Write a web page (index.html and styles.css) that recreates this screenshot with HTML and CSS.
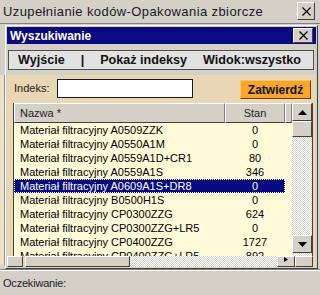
FILE: index.html
```html
<!DOCTYPE html>
<html lang="pl">
<head>
  <meta charset="UTF-8" />
  <title>Wyszukiwanie</title>
  <link rel="stylesheet" href="styles.css">
</head>
<body>
<div class="screen">

  <header class="app-title">
    <span>Uzupełnianie kodów-Opakowania zbiorcze</span>
    <button class="x-btn x-big"><svg width="9" height="9" viewBox="0 0 9 9"><path d="M0.5 0.5L8.5 8.5M8.5 0.5L0.5 8.5" stroke="#000" stroke-width="1.2"/></svg></button>
  </header>

  <div class="desk">
    <div class="peek"><div class="peek-body"></div></div>

    <div class="dialog">
      <div class="dlg-title">
        <span>Wyszukiwanie</span>
        <button class="x-btn x-small"><svg width="9" height="9" viewBox="0 0 9 9"><path d="M0.5 0.5L8.5 8.5M8.5 0.5L0.5 8.5" stroke="#000" stroke-width="1.2"/></svg></button>
      </div>

      <nav class="menu">
        <span>Wyjście</span>
        <span>|</span>
        <span>Pokaż indeksy</span>
        <span>Widok:wszystko</span>
      </nav>

      <div class="dlg-body">
        <div class="search">
          <label>Indeks:</label>
          <input type="text">
          <button class="ok">Zatwierdź</button>
        </div>

        <div class="list">
          <div class="list-main">
            <div class="cols">
              <div class="head">
                <div class="h-name">Nazwa *</div>
                <div class="h-stan">Stan</div>
                <div class="h-fill"></div>
              </div>
              <div class="row"><span class="r-name">Materiał filtracyjny A0509ZZK</span><span class="r-stan">0</span></div>
              <div class="row"><span class="r-name">Materiał filtracyjny A0550A1M</span><span class="r-stan">0</span></div>
              <div class="row"><span class="r-name">Materiał filtracyjny A0559A1D+CR1</span><span class="r-stan">80</span></div>
              <div class="row"><span class="r-name">Materiał filtracyjny A0559A1S</span><span class="r-stan">346</span></div>
              <div class="row sel"><span class="r-name">Materiał filtracyjny A0609A1S+DR8</span><span class="r-stan">0</span></div>
              <div class="row"><span class="r-name">Materiał filtracyjny B0500H1S</span><span class="r-stan">0</span></div>
              <div class="row"><span class="r-name">Materiał filtracyjny CP0300ZZG</span><span class="r-stan">624</span></div>
              <div class="row"><span class="r-name">Materiał filtracyjny CP0300ZZG+LR5</span><span class="r-stan">0</span></div>
              <div class="row"><span class="r-name">Materiał filtracyjny CP0400ZZG</span><span class="r-stan">1727</span></div>
              <div class="row"><span class="r-name">Materiał filtracyjny CP0400ZZG+LR5</span><span class="r-stan">892</span></div>
            </div>
            <div class="vscroll">
              <div class="sb-btn sb-v"><svg width="9" height="5" viewBox="0 0 9 5"><path d="M4.5 0L9 5H0Z" fill="#000"/></svg></div>
              <div class="sb-thumb-v"></div>
              <div class="sb-track"></div>
              <div class="sb-btn sb-v sb-down"><svg width="9" height="5" viewBox="0 0 9 5"><path d="M0 0H9L4.5 5Z" fill="#000"/></svg></div>
            </div>
          </div>
          <div class="hscroll">
            <div class="sb-btn sb-h-left"></div>
            <div class="sb-thumb-h"></div>
            <div class="sb-track"></div>
            <div class="sb-btn sb-h-right"><svg width="4" height="5" viewBox="0 0 4 5"><path d="M0 0L4 2.5L0 5Z" fill="#000"/></svg></div>
            <div class="sb-corner"></div>
          </div>
        </div>
      </div>
    </div>
  </div>

  <footer class="status">Oczekiwanie:</footer>
</div>
</body>
</html>
```

FILE: styles.css
```css
* {
  box-sizing: border-box;
}
body {
  margin: 0;
  background: #d4d0c8;
  font-family: "Liberation Sans", Arial, sans-serif;
  color: #000;
}
.screen {
  width: 320px;
  height: 295px;
  display: flex;
  flex-direction: column;
  overflow: hidden;
}

/* outer window title */
.app-title {
  height: 24px;
  flex: none;
  display: flex;
  align-items: center;
  justify-content: space-between;
  padding: 0 5px 1px 3px;
  border-bottom: 1px solid #808080;
  font-size: 13px;
  letter-spacing: 0.4px;
  color: #1a1a1a;
}
.x-btn {
  padding: 0;
  background: #d4d0c8;
  border: 1px solid;
  border-color: #fff #404040 #404040 #fff;
  display: flex;
  align-items: center;
  justify-content: center;
}
.x-big {
  width: 18px;
  height: 18px;
}
.x-small {
  width: 20px;
  height: 15px;
}

.desk {
  flex: 1;
  display: flex;
}
.peek {
  width: 5px;
  display: flex;
  flex-direction: column;
  padding: 51px 0 4px;
}
.peek-body {
  flex: 1;
  background: #ece0c6;
  border-right: 1px solid #9a9080;
}

/* dialog */
.dialog {
  width: 313px;
  margin-top: 1px;
  border: 1px solid;
  border-color: #fff #404040 #404040 #fff;
  padding: 1px 1px 0;
  display: flex;
  flex-direction: column;
}
.dlg-title {
  height: 17px;
  flex: none;
  background: #0a0a82;
  color: #fff;
  font-weight: bold;
  font-size: 12px;
  display: flex;
  align-items: center;
  justify-content: space-between;
  padding: 0 3px;
}
.menu {
  height: 20px;
  flex: none;
  margin: 6px 2px 5px 1px;
  border: 1px solid #505050;
  background: #e2e2e2;
  display: flex;
  align-items: center;
  gap: 16px;
  padding-left: 9px;
  font-weight: bold;
  font-size: 12.6px;
  color: #111;
}
.dlg-body {
  flex: 1;
  background: #e8d6b4;
  display: flex;
  flex-direction: column;
}

/* search row */
.search {
  display: flex;
  align-items: flex-start;
  height: 20px;
  margin-top: 4px;
  padding-left: 7px;
  font-size: 11px;
}
.search label {
  width: 43px;
  line-height: 19px;
  color: #222;
}
.search input {
  width: 136px;
  height: 19px;
  margin: 0;
  border: 1px solid #1a1a1a;
  background: #fff;
}
.ok {
  width: 71px;
  height: 19px;
  margin: 1px 0 0 47px;
  padding: 0;
  background: #f8a52a;
  border: 1px solid;
  border-color: #fbc66a #6a3c08 #6a3c08 #fbc66a;
  font-family: "Liberation Sans", Arial, sans-serif;
  font-weight: bold;
  font-size: 12px;
  color: #111;
}

/* list */
.list {
  margin-top: 4px;
}
.list-main {
  display: flex;
  height: 153px;
  width: 300px;
  margin-left: 6px;
  border-left: 1px solid #404040;
  border-right: 1px solid #404040;
}
.cols {
  width: 278px;
  overflow: hidden;
  background: #fffad8;
  font-size: 11px;
}
.head {
  display: flex;
  height: 20px;
}
.head div {
  background: #d4d0c8;
  border: 1px solid;
  border-color: #fff #808080 #404040 #fff;
  line-height: 18px;
  color: #222;
}
.h-name {
  width: 211px;
  padding-left: 5px;
}
.h-stan {
  width: 60px;
  text-align: center;
}
.h-fill {
  flex: 1;
}
.row {
  display: flex;
  width: 271px;
  height: 14px;
  line-height: 14px;
}
.r-name {
  width: 211px;
  padding-left: 6px;
  white-space: nowrap;
  overflow: hidden;
}
.r-stan {
  width: 60px;
  text-align: center;
}
.row.sel {
  background: #0a0a80;
  color: #fff;
  outline: 1px dotted #fff;
  outline-offset: -1px;
}

/* scrollbars */
.sb-btn {
  background: #d4d0c8;
  border: 1px solid;
  border-color: #fff #404040 #404040 #fff;
  display: flex;
  align-items: center;
  justify-content: center;
}
.sb-track {
  flex: 1;
  background: repeating-conic-gradient(#d4d0c8 0 25%, #fff 0 50%) 0 0 / 2px 2px;
}
.vscroll {
  width: 20px;
  display: flex;
  flex-direction: column;
  background: repeating-conic-gradient(#d4d0c8 0 25%, #fff 0 50%) 0 0 / 2px 2px;
}
.sb-v {
  height: 18px;
}
.sb-down {
  margin-bottom: 3px;
}
.sb-thumb-v {
  height: 16px;
  background: #d4d0c8;
  border: 1px solid;
  border-color: #fff #404040 #404040 #fff;
}
.hscroll {
  display: flex;
  height: 11px;
  width: 306px;
}
.sb-h-left {
  width: 16px;
}
.sb-thumb-h {
  width: 105px;
  margin-left: 2px;
  background: #d4d0c8;
  border: 1px solid;
  border-color: #fff #404040 #404040 #fff;
}
.sb-h-right {
  width: 18px;
  align-items: flex-start;
}
.sb-corner {
  width: 18px;
  background: #d4d0c8;
  border: 1px solid;
  border-color: #fff #404040 #404040 #fff;
}

/* status */
.status {
  height: 26px;
  flex: none;
  border-top: 1px solid #808080;
  box-shadow: inset 0 1px #fff;
  display: flex;
  align-items: center;
  padding-left: 3px;
  font-size: 11px;
  letter-spacing: -0.2px;
  color: #222;
}
```
